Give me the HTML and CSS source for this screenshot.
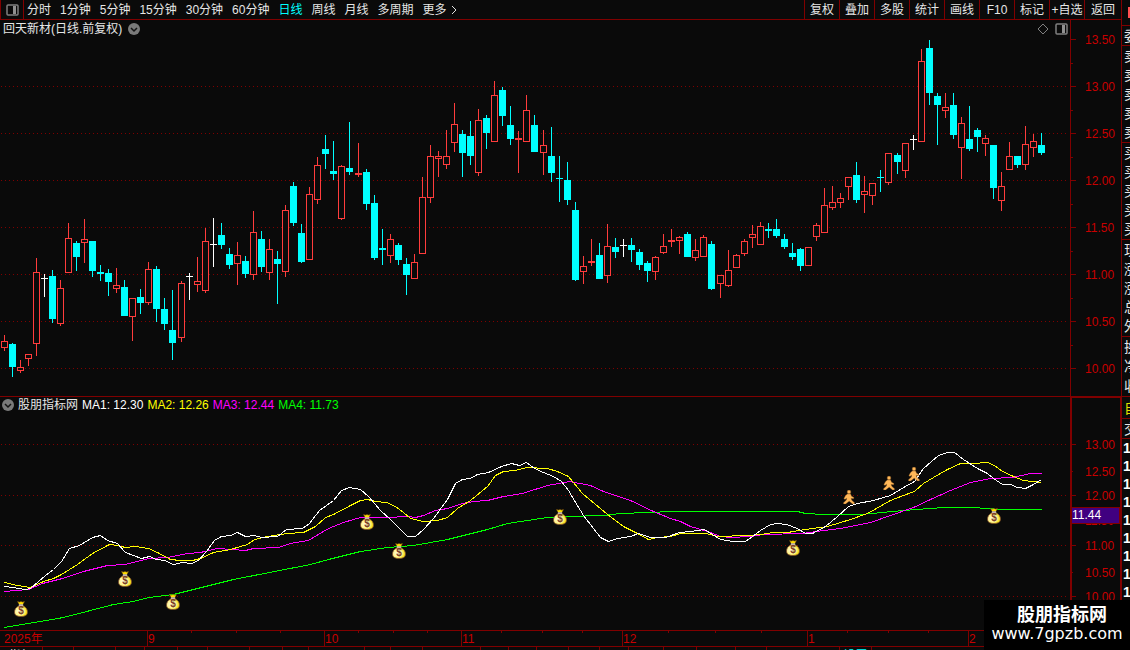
FILE: index.html
```html
<!DOCTYPE html>
<html lang="zh-CN">
<head>
    <meta charset="UTF-8">
    <meta name="viewport" content="width=device-width, initial-scale=1.0">
    <title>回天新材 日线</title>
    <link rel="stylesheet" href="styles.css">
</head>
<body>

    <div class="app">
        <main class="main">
            <nav class="toolbar">
                <button class="panel-toggle" aria-label="侧栏">
                    <svg width="13" height="12" viewBox="0 0 13 12"><rect x="1" y="1" width="11" height="10" rx="1" fill="none" stroke="#808080" stroke-width="1.5"/><rect x="7" y="2" width="3" height="8" fill="#909090"/></svg>
                </button>
                <div class="periods">
                    <button>分时</button>
                    <button>1分钟</button>
                    <button>5分钟</button>
                    <button>15分钟</button>
                    <button>30分钟</button>
                    <button>60分钟</button>
                    <button class="active">日线</button>
                    <button>周线</button>
                    <button>月线</button>
                    <button>多周期</button>
                    <button class="more">更多<svg width="6" height="10" viewBox="0 0 6 10"><path d="M1 1 L5 5 L1 9" fill="none" stroke="#e0e0e0"/></svg></button>
                </div>
                <div class="tools">
                    <button>复权</button>
                    <button>叠加</button>
                    <button>多股</button>
                    <button>统计</button>
                    <button>画线</button>
                    <button>F10</button>
                    <button>标记</button>
                    <button>+自选</button>
                    <button>返回</button>
                </div>
            </nav>

            <section class="panel">
                <header class="panel-title">
                    <span>回天新材(日线.前复权)</span>
                    <svg width="12" height="12" viewBox="0 0 12 12"><circle cx="6" cy="6" r="6" fill="#7a7a7a"/><path d="M3 5 L6 8 L9 5" fill="none" stroke="#141414" stroke-width="1.5"/></svg>
                </header>
                <div class="panel-tools">
                    <svg width="12" height="12" viewBox="0 0 12 12"><path d="M6 1 L11 6 L6 11 L1 6 Z" fill="none" stroke="#808080"/></svg>
                    <svg width="13" height="12" viewBox="0 0 13 12"><rect x="1" y="1" width="11" height="10" rx="1" fill="none" stroke="#808080" stroke-width="1.5"/><rect x="7" y="2" width="3" height="8" fill="#909090"/></svg>
                </div>
                <svg class="chart" id="price-chart" viewBox="0 20 1121 376"></svg>
            </section>

            <section class="panel">
                <header class="panel-title indicator-title">
                    <svg width="12" height="12" viewBox="0 0 12 12"><circle cx="6" cy="6" r="6" fill="#7a7a7a"/><path d="M3 5 L6 8 L9 5" fill="none" stroke="#141414" stroke-width="1.5"/></svg>
                    <span>股朋指标网</span>
                    <span class="ma1">MA1: 12.30</span>
                    <span class="ma2">MA2: 12.26</span>
                    <span class="ma3">MA3: 12.44</span>
                    <span class="ma4">MA4: 11.73</span>
                </header>
                <svg class="chart" id="ma-chart" viewBox="0 396 1121 251">
                    <defs>
                        <radialGradient id="gold" cx="38%" cy="50%" r="60%">
                            <stop offset="0" stop-color="#fffbd8"/>
                            <stop offset="0.6" stop-color="#fff490"/>
                            <stop offset="1" stop-color="#f4d800"/>
                        </radialGradient>
                        <symbol id="bag" viewBox="0 0 14 16">
                            <path d="M3.5 0.5 L5.5 1 L7 0.5 L8.5 1 L10.5 0.5 L9 3.5 H5 Z" fill="#ffe000" stroke="#6a4010" stroke-width="0.6"/>
                            <path d="M5 3.5 H9 L9.5 6 H4.5 Z" fill="#ffffff"/>
                            <path d="M4.8 5 C1.8 6.2 0.5 8.6 0.5 11 C0.5 14 2.6 15.5 7 15.5 C11.4 15.5 13.5 14 13.5 11 C13.5 8.6 12.2 6.2 9.2 5 Z" fill="url(#gold)" stroke="#7a4a30" stroke-width="0.8"/>
                            <text class="coin" x="7" y="13" text-anchor="middle">$</text>
                        </symbol>
                        <symbol id="walker" viewBox="0 0 12 14">
                            <g fill="#ffb858" stroke="#7a4818" stroke-width="0.4">
                                <circle cx="6" cy="2" r="1.9"/>
                                <path d="M4.2 4 H7.6 L8.6 6.2 L11 7.6 L10.6 8.8 L8.2 8.4 L8.8 10.2 L11.8 13 L11 14 H9.6 L6.2 11.2 L2.6 14 H0.8 L0.2 13 L3.4 10 L3.6 8.2 L2 9.4 L0.8 8.6 L2.4 5.8 Z"/>
                            </g>
                        </symbol>
                    </defs>
                </svg>
            </section>

            <div class="tabs" id="tabs"></div>
        </main>

        <aside class="quotes">
            <div class="group head"><i class="mark"></i></div>
            <div class="group single"><span>委</span></div>
            <div class="group five"><span>卖</span><span>卖</span><span>卖</span><span>卖</span><span>卖</span></div>
            <div class="group five"><span>买</span><span>买</span><span>买</span><span>买</span><span>买</span></div>
            <div class="group five"><span>现</span><span>涨</span><span>涨</span><span>总</span><span>外</span></div>
            <div class="group three"><span>换</span><span>净</span><span>收</span></div>
            <div class="group own"><span>自</span></div>
            <div class="group single"><span>交</span></div>
            <div class="ticks"><span>1</span><span>1</span><span>1</span><span>1</span><span>1</span><span>1</span><span>1</span><span>1</span><span>1</span></div>
        </aside>
    </div>

    <div class="brand">
        <strong>股朋指标网</strong>
        <span>www.7gpzb.com</span>
    </div>

    <script src="chart.js"></script>
</body>
</html>
```
FILE: styles.css
```css
* {
    box-sizing: border-box;
}

body {
    margin: 0;
    height: 100vh;
    overflow: hidden;
    background: #0a0a0a;
    color: #e6e6e6;
    font-family: "Liberation Sans", "Noto Sans CJK SC", sans-serif;
    font-size: 12px;
    line-height: 18px;
}

button {
    margin: 0;
    padding: 0;
    border: none;
    background: none;
    color: inherit;
    font: inherit;
    white-space: nowrap;
    cursor: pointer;
}

svg {
    display: block;
}

.app {
    display: grid;
    grid-template-columns: 1fr 9px;
    height: 100%;
}

.main {
    display: flex;
    flex-direction: column;
    min-width: 0;
}

/* toolbar */
.toolbar {
    display: flex;
    height: 20px;
    border-bottom: 1px solid #800000;
}

.panel-toggle {
    width: 24px;
    padding: 0 5px;
    border: solid #800000;
    border-width: 0 1px;
}

.periods {
    display: flex;
    gap: 9px;
    padding-left: 3px;
}

.periods .active {
    color: #00ffff;
}

.periods .more {
    display: flex;
    align-items: center;
    gap: 4px;
}

.tools {
    display: flex;
    margin-left: auto;
}

.tools button {
    width: 35px;
    border-left: 1px solid #800000;
}

.tools button:last-child {
    width: 37px;
}

/* chart panels */
.panel {
    position: relative;
}

.chart {
    width: 100%;
    height: auto;
}

.panel-title {
    position: absolute;
    top: 0;
    left: 3px;
    display: flex;
    align-items: center;
    gap: 6px;
}

.indicator-title {
    left: 2px;
    gap: 4px;
}

.panel-tools {
    position: absolute;
    top: 3px;
    right: 53px;
    display: flex;
    gap: 6px;
}

.ma1 { color: #ffffff; stroke: #ffffff; }
.ma2 { color: #ffff00; stroke: #ffff00; }
.ma3 { color: #ff00ff; stroke: #ff00ff; }
.ma4 { color: #00ff00; stroke: #00ff00; }

.panel-title span {
    stroke: none;
}

.chart polyline,
.chart line,
.chart rect {
    shape-rendering: crispEdges;
}

.chart polyline {
    fill: none;
}

.axis {
    stroke: #800000;
}

.grid {
    stroke: #800000;
    stroke-dasharray: 1 3;
}

.label {
    fill: #c80000;
    font-size: 12px;
}

.up {
    fill: #0a0a0a;
    stroke: #ff3c3c;
}

.down {
    fill: #00ffff;
    stroke: #00ffff;
}

.flat {
    fill: #ffffff;
    stroke: #ffffff;
}

.price-tag {
    fill: #400080;
    stroke: #800000;
}

.price-text {
    fill: #ffffff;
}

.coin {
    fill: #7a3c28;
    font-size: 10px;
    font-weight: bold;
}

/* bottom tabs */
.tabs {
    display: flex;
    flex: 1;
    min-height: 0;
    overflow: hidden;
}

.tabs button {
    flex: none;
    align-self: flex-start;
    height: 18px;
    border-right: 1px solid #800000;
}

.tabs .cyan {
    color: #00ffff;
}

/* right quote column */
.quotes {
    overflow: hidden;
    border-left: 1px solid #800000;
    font-size: 14px;
}

.group {
    display: grid;
    align-items: center;
    padding-left: 2px;
    border-bottom: 1px solid #800000;
}

.head {
    height: 26px;
}

.mark {
    width: 8px;
    height: 11px;
    margin-left: 4px;
    background: #ff5050;
}

.single {
    height: 20px;
}

.five {
    height: 97px;
}

.three {
    height: 60px;
}

.own {
    height: 22px;
    color: #e0e000;
}

.ticks {
    display: grid;
    padding-left: 1px;
    color: #ffffff;
    font-weight: bold;
}

/* site badge over the lower right corner */
.brand {
    position: absolute;
    right: 0;
    bottom: 0;
    display: flex;
    flex-direction: column;
    align-items: center;
    width: 146px;
    height: 50px;
    padding-top: 5px;
    background: #000000;
    color: #ffffff;
}

.brand strong {
    padding-left: 10px;
    font-size: 18px;
    line-height: 20px;
}

.brand span {
    font-family: "DejaVu Sans", sans-serif;
    font-size: 16px;
    line-height: 18px;
}
```
FILE: chart.js
```js
const NS = 'http://www.w3.org/2000/svg';

// kind, high, body top, body bottom, low
const candles = `
r 335 341 348 351|c 343 344 367 377|r 360 367 371 373|r 354 354 359 366|r 258 272 344 356|w 274 278 279 297
c 270 276 319 323|r 280 288 324 326|r 223 238 273 273|c 241 243 257 271|r 219 239 243 263|c 241 241 271 277
c 265 272 274 281|c 269 273 282 296|r 268 285 289 293|c 280 287 316 316|r 298 298 317 341|c 289 297 303 314
r 262 269 303 305|c 266 269 309 322|c 298 309 324 330|c 290 330 343 360|r 281 283 338 342|w 273 276 277 300
r 257 281 285 292|r 228 241 291 293|w 218 244 245 267|c 223 235 245 249|c 248 254 265 269|r 242 255 264 285
c 256 261 274 278|r 211 232 275 280|c 231 239 267 272|r 239 249 273 280|c 251 259 264 304|r 205 210 272 277
c 182 186 223 226|c 224 233 262 263|r 187 194 260 260|r 157 165 200 204|c 135 149 154 169|c 141 171 174 180
r 165 166 219 220|c 122 168 172 175|r 143 173 175 177|c 169 172 204 210|c 195 203 258 260|c 229 248 250 265
r 234 239 256 263|c 243 245 260 265|c 258 264 275 295|r 254 262 279 279|r 177 197 254 254|r 145 156 198 203
r 151 156 159 177|r 130 156 165 169|r 103 124 143 152|c 130 134 153 177|c 121 136 156 165|r 109 120 173 176
c 115 118 133 149|r 81 95 142 142|c 87 90 116 126|c 106 125 139 145|r 131 138 140 173|r 95 110 142 142
c 115 125 152 152|r 130 145 153 175|c 127 156 173 182|c 156 178 179 202|c 162 180 200 205|c 202 210 280 281
r 256 266 272 284|r 239 261 263 266|c 243 255 279 279|r 224 246 276 283|c 238 247 252 258|w 239 245 246 257
c 238 245 250 262|c 249 252 265 270|c 261 263 271 282|r 256 257 272 280|r 234 246 253 254|r 229 240 242 247
r 236 237 241 254|c 232 234 257 257|r 239 250 258 261|r 235 237 257 257|c 241 244 289 290|r 275 275 284 298
r 250 270 286 287|r 254 255 268 268|r 239 241 254 256|r 225 234 238 248|r 222 226 245 245|c 223 229 231 238
c 219 229 236 238|c 234 239 247 249|c 243 253 257 260|c 248 249 266 271|r 247 247 266 266|r 223 225 237 241
r 188 205 233 233|r 186 202 208 210|r 193 198 203 208|r 177 177 187 200|c 162 175 200 203|r 176 191 195 213
r 183 183 196 205|c 170 177 178 192|r 153 153 183 185|c 153 155 162 174|r 143 143 171 178|w 135 139 140 150
r 49 61 142 142|c 40 48 93 105|c 93 96 105 145|r 93 107 111 118|c 93 105 135 139|r 117 123 148 179
c 106 139 149 151|c 128 130 137 152|r 135 138 144 156|c 145 145 188 199|r 172 186 201 211|r 142 156 170 170
c 156 156 165 168|r 126 144 165 170|r 134 141 148 157|c 133 145 153 155`;

const lines = {
    ma4: '4,627 28,623 63,617 113,604 133,601 148,597 173,594 233,579 310,564 328,559 360,551 387,547 413,545 447,539 487,529 507,523 547,517 567,516 603,515 620,513 647,512 673,511 797,511 805,513 823,514 860,514 903,510 943,507 973,507 1000,509 1041,509',
    ma3: '4,591 28,589 42,583 62,578 83,571 107,565 125,564 148,558 167,557 187,553 200,552 217,548 245,550 253,548 278,547 290,543 308,540 328,528 343,522 360,517 387,517 407,516 415,517 423,515 435,510 447,508 462,503 473,501 487,500 503,496 522,493 547,485 569,481 590,485 603,491 630,500 653,511 670,518 680,521 690,526 707,531 720,536 730,537 750,536 763,534 802,533 823,530 840,528 870,522 890,515 913,507 930,499 950,490 970,482 990,478 1012,477 1030,473 1041,473',
    ma2: '4,582 17,585 30,587 43,581 53,578 61,574 77,564 92,553 109,544 117,545 125,547 135,546 148,548 157,552 170,559 180,560 192,560 200,558 213,552 230,549 247,544 254,539 267,536 287,533 303,532 315,526 325,517 333,514 350,505 360,500 367,499 375,501 386,502 395,506 403,512 410,518 423,521 437,520 447,517 457,508 470,500 487,486 495,475 503,471 515,470 526,467 547,468 557,471 568,476 582,493 607,514 623,526 637,533 648,539 657,537 670,536 680,533 706,533 717,536 747,535 760,534 773,532 787,532 805,529 827,526 840,522 850,519 867,513 890,500 903,495 914,491 923,483 933,477 947,469 960,463 973,463 987,462 994,465 1002,471 1013,476 1023,480 1041,482',
    ma1: '4,586 12,587 25,589 30,588 45,575 53,569 61,561 69,548 79,545 92,537 100,535 107,540 117,543 125,552 133,555 141,558 149,556 156,559 164,560 173,564 182,562 191,563 198,560 206,551 214,540 221,536 230,535 237,532 245,536 254,535 261,537 277,536 286,529 302,528 309,523 319,510 333,500 341,490 349,487 360,489 368,496 380,510 390,519 407,536 415,536 423,529 433,518 447,499 455,483 462,479 470,478 477,474 488,472 501,466 511,463 519,465 526,462 534,468 543,472 553,476 561,481 568,490 583,515 600,537 608,541 617,538 630,536 638,533 650,537 665,537 679,532 690,531 704,529 720,539 733,541 745,541 752,536 760,530 770,524 777,523 786,524 797,528 805,533 812,533 825,526 837,516 848,506 857,503 873,500 890,495 903,487 914,481 923,468 938,455 947,452 954,452 963,459 977,468 987,473 993,478 1002,484 1010,484 1017,487 1025,488 1033,484 1041,479'
};

const bags = [[21, 609], [125, 579], [173, 602], [367, 522], [399, 551], [560, 517], [793, 548], [994, 516]];
const walkers = [[849, 497], [889, 483], [914, 474]];

const months = [[147, '9'], [324, '10'], [461, '11'], [622, '12'], [807, '1'], [968, '2']];
const weeks = [191, 236, 280, 358, 393, 427, 501, 542, 582, 668, 715, 761, 847, 888, 928];

const tabEdges = [42, 73, 115, 144, 177, 207, 249, 282, 308, 364, 390, 422, 480, 508, 536, 568, 599, 628, 663, 696, 735, 766, 839, 871];

function add(parent, tag, attrs, text) {
    const el = document.createElementNS(NS, tag);
    for (const key in attrs) {
        el.setAttribute(key, attrs[key]);
    }
    if (text) {
        el.textContent = text;
    }
    parent.appendChild(el);
    return el;
}

function line(parent, x1, y1, x2, y2, cls) {
    add(parent, 'line', { x1: x1, y1: y1, x2: x2, y2: y2, class: cls });
}

function hline(parent, x1, x2, y, cls) {
    line(parent, x1, y + 0.5, x2, y + 0.5, cls);
}

function vline(parent, x, y1, y2, cls) {
    line(parent, x + 0.5, y1, x + 0.5, y2, cls);
}

function label(parent, x, y, text) {
    add(parent, 'text', { x: x, y: y, class: 'label' }, text);
}

function drawPrice() {
    const svg = document.getElementById('price-chart');
    vline(svg, 1070, 20, 396, 'axis');
    for (let i = 0; i < 8; i++) {
        const y = 39 + i * 47;
        if (i > 0) {
            hline(svg, 1, 1069, y, 'grid');
        }
        hline(svg, 1071, 1076, y, 'axis');
        if (i < 7) {
            hline(svg, 1071, 1073, y + 24, 'axis');
        }
        label(svg, 1085, y + 5, (13.5 - i * 0.5).toFixed(2));
    }

    const kinds = { r: 'up', c: 'down', w: 'flat' };
    candles.trim().split(/[|\n]/).forEach((row, i) => {
        const [kind, ...values] = row.split(' ');
        const [high, top, bottom, low] = values.map(Number);
        const x = 4 + 8 * i + Math.floor((i + 0.7) / 22.33);
        const cls = kinds[kind];
        vline(svg, x, high, low, cls);
        if (bottom - top < 2) {
            hline(svg, x - 3, x + 4, top, cls);
        } else {
            add(svg, 'rect', { x: x - 2.5, y: top + 0.5, width: 6, height: bottom - top - 1, class: cls });
        }
    });
}

function drawIndicator() {
    const svg = document.getElementById('ma-chart');
    hline(svg, 0, 1121, 396, 'axis');
    hline(svg, 1070, 1121, 397, 'axis');
    [1070, 1071, 1120].forEach(x => vline(svg, x, 396, 630, 'axis'));

    [444, 495, 545, 596].forEach(y => {
        hline(svg, 1, 1069, y, 'grid');
        hline(svg, 1072, 1076, y, 'axis');
    });
    [471, 520, 572].forEach(y => hline(svg, 1072, 1073, y, 'axis'));
    [444, 471, 495, 520, 545, 572, 596].forEach((y, i) => {
        label(svg, 1085, y + 5, (13 - i * 0.5).toFixed(2));
    });
    add(svg, 'rect', { x: 1071.5, y: 507.5, width: 48, height: 16, class: 'price-tag' });
    add(svg, 'text', { x: 1072, y: 519, class: 'label price-text' }, '11.44');

    for (const name in lines) {
        add(svg, 'polyline', { points: lines[name], class: name, transform: 'translate(0.5 0.5)' });
    }
    bags.forEach(([x, y]) => add(svg, 'use', { href: '#bag', x: x - 7, y: y - 8, width: 14, height: 16 }));
    walkers.forEach(([x, y]) => add(svg, 'use', { href: '#walker', x: x - 6, y: y - 7, width: 12, height: 14 }));

    // time axis
    hline(svg, 0, 1121, 630, 'axis');
    hline(svg, 0, 1121, 646, 'axis');
    weeks.forEach(x => vline(svg, x, 631, 633, 'axis'));
    label(svg, 4, 643, '2025年');
    months.forEach(([x, text]) => {
        vline(svg, x, 631, 646, 'axis');
        label(svg, x + 1, 643, text);
    });
}

function drawTabs() {
    const tabs = document.getElementById('tabs');
    let left = -1;
    tabEdges.forEach((edge, i) => {
        const button = document.createElement('button');
        button.style.width = (edge - left) + 'px';
        if (i === 0) {
            button.textContent = '指标';
        }
        if (edge === 871) {
            button.textContent = '设置';
            button.className = 'cyan';
        }
        tabs.appendChild(button);
        left = edge;
    });
}

drawPrice();
drawIndicator();
drawTabs();
```
